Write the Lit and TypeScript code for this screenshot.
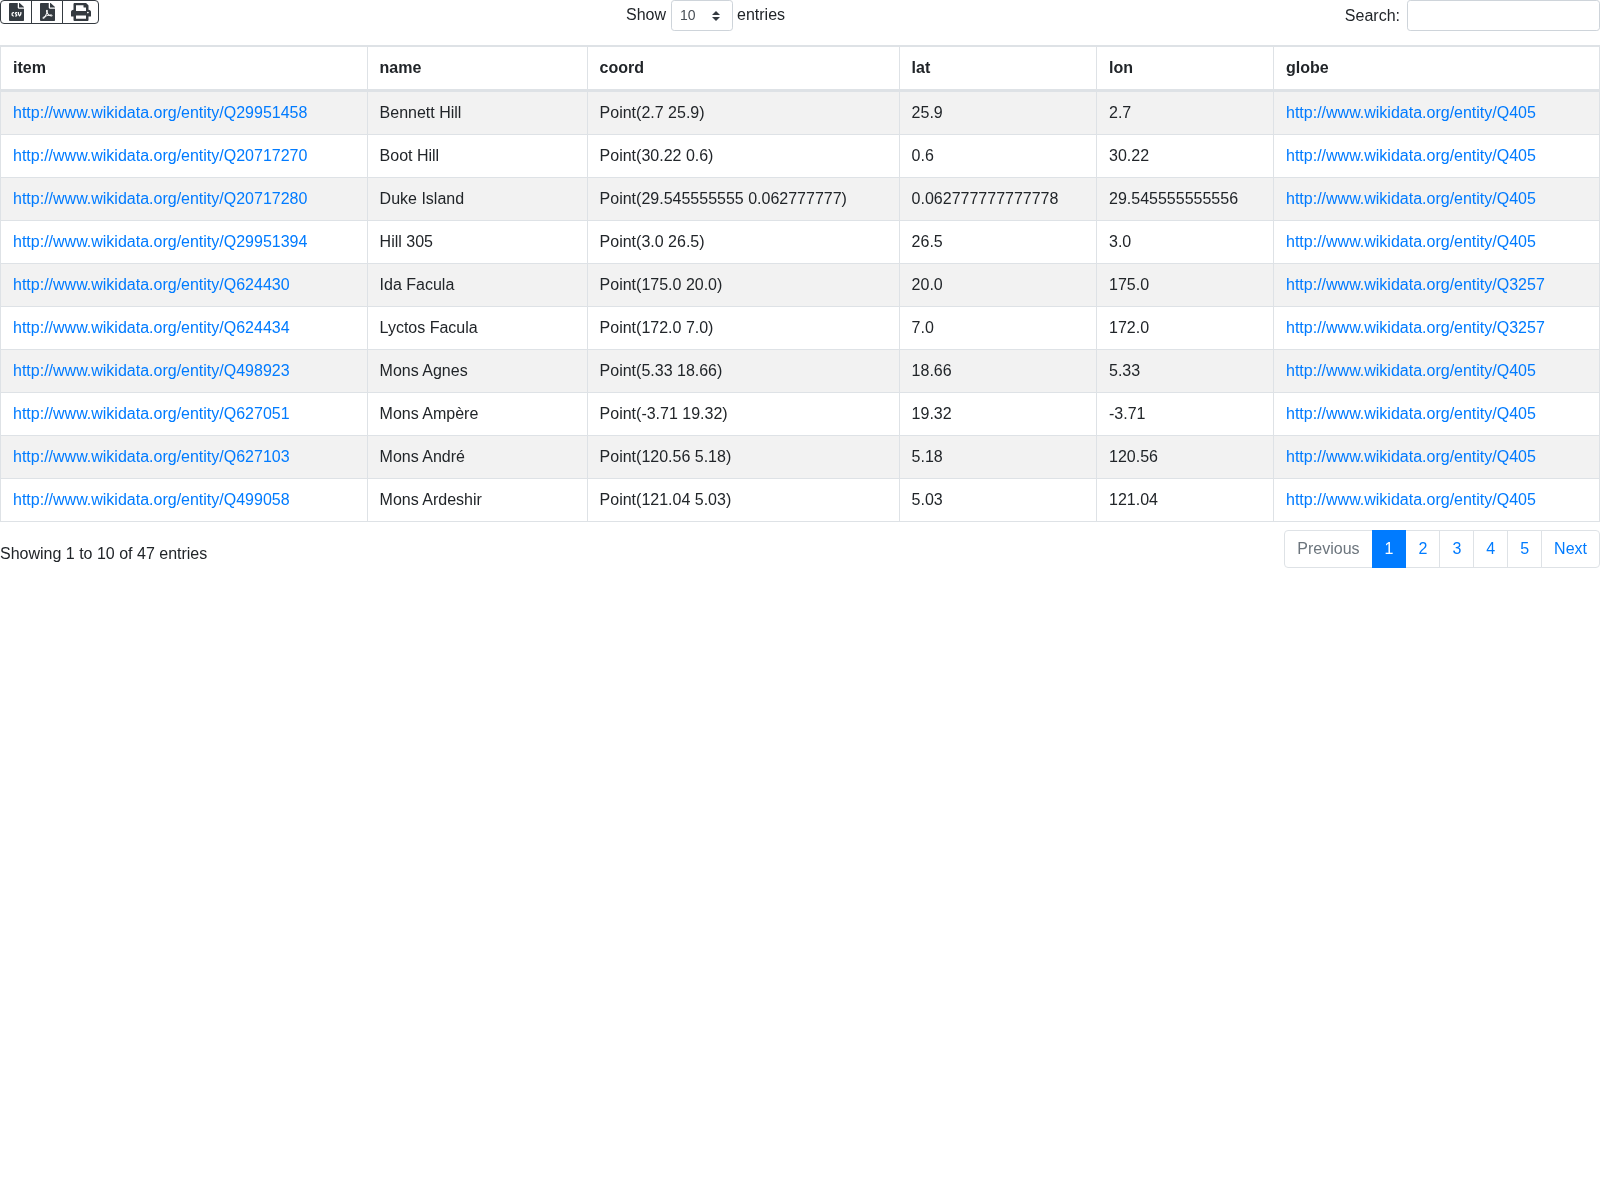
import { LitElement, html, css, svg } from "lit";
import { customElement } from "lit/decorators.js";

const ICONS = {
  csv: { vb: "0 0 384 512", w: 15, d: "M224 136V0H24C10.7 0 0 10.7 0 24v464c0 13.3 10.7 24 24 24h336c13.3 0 24-10.7 24-24V160H248c-13.2 0-24-10.8-24-24zm-96 144c0 4.42-3.58 8-8 8h-8c-8.84 0-16 7.16-16 16v32c0 8.84 7.16 16 16 16h8c4.42 0 8 3.58 8 8v16c0 4.42-3.58 8-8 8h-8c-26.51 0-48-21.49-48-48v-32c0-26.51 21.49-48 48-48h8c4.42 0 8 3.58 8 8v16zm44.27 104H160c-4.42 0-8-3.58-8-8v-16c0-4.42 3.58-8 8-8h12.27c5.95 0 10.41-3.5 10.41-6.62 0-1.3-.75-2.66-2.12-3.84l-21.89-18.77c-8.47-7.22-13.33-17.48-13.33-28.14 0-21.3 19.02-38.62 42.41-38.62H200c4.42 0 8 3.58 8 8v16c0 4.42-3.58 8-8 8h-12.27c-5.95 0-10.41 3.5-10.41 6.62 0 1.3.75 2.66 2.12 3.84l21.89 18.77c8.47 7.22 13.33 17.48 13.33 28.14.01 21.29-19 38.62-42.39 38.62zM256 264v20.8c0 20.27 5.7 40.17 16 56.88 10.3-16.7 16-36.61 16-56.88V264c0-4.42 3.58-8 8-8h16c4.42 0 8 3.58 8 8v20.8c0 35.48-12.88 68.89-36.28 94.09-3.02 3.25-7.27 5.11-11.72 5.11s-8.7-1.86-11.72-5.11c-23.4-25.2-36.28-58.61-36.28-94.09V264c0-4.42 3.58-8 8-8h16c4.42 0 8 3.58 8 8zm121-159L279.1 7c-4.5-4.5-10.6-7-17-7H256v128h128v-6.1c0-6.3-2.5-12.4-7-16.9z" },
  pdf: { vb: "0 0 384 512", w: 15, d: "M181.9 256.1c-5-16-4.9-46.9-2-46.9 8.4 0 7.6 36.9 2 46.9zm-1.7 47.2c-7.7 20.2-17.3 43.3-28.4 62.7 18.3-7 39-17.2 62.9-21.9-12.7-9.6-24.9-23.4-34.5-40.8zM86.1 428.1c0 .8 13.2-5.4 34.9-40.2-6.7 6.3-29.1 24.5-34.9 40.2zM248 160h136v328c0 13.3-10.7 24-24 24H24c-13.3 0-24-10.7-24-24V24C0 10.7 10.7 0 24 0h200v136c0 13.2 10.8 24 24 24zm-8 171.8c-20-12.2-33.3-29-42.7-53.8 4.5-18.5 11.6-46.6 6.2-64.2-4.7-29.4-42.4-26.5-47.8-6.8-5 18.3-.4 44.1 8.1 77-11.6 27.6-28.7 64.6-40.8 85.8-.1 0-.1.1-.2.1-27.1 13.9-73.6 44.5-54.5 68 5.6 6.9 16 10 21.5 10 17.9 0 35.7-18 61.1-61.8 25.8-8.5 54.1-19.1 79-23.2 21.7 11.8 47.1 19.5 64 19.5 29.2 0 31.2-32 19.7-43.4-13.9-13.6-54.3-9.7-73.6-7.2zM377 105L279 7c-4.5-4.5-10.6-7-17-7h-6v128h128v-6.1c0-6.3-2.5-12.4-7-16.9zm-74.1 255.3c4.1-2.7-2.5-11.9-42.8-9 37.1 15.8 42.8 9 42.8 9z" },
  print: { vb: "0 0 512 512", w: 20, d: "M448 192V77.25c0-8.49-3.37-16.62-9.37-22.63L393.37 9.37c-6-6-14.14-9.37-22.63-9.37H96C78.33 0 64 14.33 64 32v160c-35.35 0-64 28.65-64 64v112c0 8.84 7.16 16 16 16h48v96c0 17.67 14.33 32 32 32h320c17.67 0 32-14.33 32-32v-96h48c8.84 0 16-7.16 16-16V256c0-35.35-28.65-64-64-64zm-64 256H128v-96h256v96zm0-224H128V64h192v48c0 8.84 7.16 16 16 16h48v96zm48 72c-13.25 0-24-10.75-24-24 0-13.26 10.75-24 24-24s24 10.74 24 24c0 13.25-10.75 24-24 24z" },
};

const E = "http://www.wikidata.org/entity/";
const ROWS: [string, string, string, string, string, string][] = [
  ["Q29951458", "Bennett Hill", "Point(2.7 25.9)", "25.9", "2.7", "Q405"],
  ["Q20717270", "Boot Hill", "Point(30.22 0.6)", "0.6", "30.22", "Q405"],
  ["Q20717280", "Duke Island", "Point(29.545555555 0.062777777)", "0.062777777777778", "29.545555555556", "Q405"],
  ["Q29951394", "Hill 305", "Point(3.0 26.5)", "26.5", "3.0", "Q405"],
  ["Q624430", "Ida Facula", "Point(175.0 20.0)", "20.0", "175.0", "Q3257"],
  ["Q624434", "Lyctos Facula", "Point(172.0 7.0)", "7.0", "172.0", "Q3257"],
  ["Q498923", "Mons Agnes", "Point(5.33 18.66)", "18.66", "5.33", "Q405"],
  ["Q627051", "Mons Ampère", "Point(-3.71 19.32)", "19.32", "-3.71", "Q405"],
  ["Q627103", "Mons André", "Point(120.56 5.18)", "5.18", "120.56", "Q405"],
  ["Q499058", "Mons Ardeshir", "Point(121.04 5.03)", "5.03", "121.04", "Q405"],
];
const COLS = ["item", "name", "coord", "lat", "lon", "globe"];
const WIDTHS = [367, 220, 312, 197, 177, 326];

@customElement("app-root")
export class AppRoot extends LitElement {
  static styles = css`
    :host {
      display: block;
      font-family: "Liberation Sans", Arial, sans-serif;
      font-size: 16px;
      line-height: 24px;
      color: #212529;
      will-change: transform;
    }
    a { color: #007bff; text-decoration: none; }
    .top {
      display: grid;
      grid-template-columns: 626px auto 1fr;
      align-items: start;
      height: 45px;
    }
    .btns { display: inline-flex; height: 24px; }
    .btn {
      display: flex;
      align-items: center;
      justify-content: center;
      box-sizing: border-box;
      height: 24px;
      padding: 0 7.5px 1px;
      margin: 0 0 0 -1px;
      background: #fff;
      border: 1px solid #343a40;
    }
    .btn:first-child { margin-left: 0; border-radius: 4px 0 0 4px; }
    .btn:last-child { border-radius: 0 4px 4px 0; }
    .btn svg { display: block; height: 18px; fill: #343a40; }
    .len { display: flex; align-items: flex-start; height: 31px; line-height: 29px; }
    .len select { margin: 0 4px 0 5px; }
    select {
      appearance: none;
      box-sizing: border-box;
      width: 62px;
      height: 31px;
      padding: 4px 8px;
      font: 14px/21px "Liberation Sans", Arial, sans-serif;
      color: #495057;
      background: #fff url("data:image/svg+xml,%3csvg xmlns='http://www.w3.org/2000/svg' width='4' height='5' viewBox='0 0 4 5'%3e%3cpath fill='%23343a40' d='M2 0L0 2h4zm0 5L0 3h4z'/%3e%3c/svg%3e") no-repeat right 12px center / 8px 10px;
      border: 1px solid #ced4da;
      border-radius: 3.2px;
    }
    .search { display: flex; justify-content: flex-end; gap: 7px; height: 31px; line-height: 31px; }
    input {
      box-sizing: border-box;
      width: 193px;
      height: 31px;
      padding: 4px 8px;
      background: #fff;
      border: 1px solid #ced4da;
      border-radius: 3.2px;
      font: 14px "Liberation Sans", Arial, sans-serif;
    }
    table {
      width: 1600px;
      table-layout: fixed;
      border-collapse: separate;
      border-spacing: 0;
      border-style: solid;
      border-color: #dee2e6;
      border-width: 1px 0 1px 1px;
      box-sizing: border-box;
      font-size: 16px;
      line-height: 24px;
      color: #212529;
    }
    th, td {
      box-sizing: border-box;
      text-align: left;
      padding: 9px 12px;
      border-right: 1px solid #dee2e6;
      white-space: nowrap;
      overflow: hidden;
    }
    th:nth-child(n + 2):nth-child(-n + 4),
    td:nth-child(n + 2):nth-child(-n + 4) { padding-left: 11.6px; }
    th { font-weight: 700; border-top: 1px solid #dee2e6; border-bottom: 2px solid #dee2e6; }
    td { border-top: 1px solid #dee2e6; }
    tbody tr:nth-child(odd) { background: #f2f2f2; }
    .foot {
      display: flex;
      justify-content: space-between;
      align-items: flex-start;
      margin-top: 8px;
    }
    .info { padding-top: 12px; }
    .pages { display: flex; list-style: none; margin: 0; padding: 0; }
    .pages li {
      display: block;
      padding: 6px 12px;
      margin-left: -1px;
      border: 1px solid #dee2e6;
      background: #fff;
      color: #007bff;
    }
    .pages li:first-child { margin-left: 0; border-radius: 4px 0 0 4px; color: #6c757d; }
    .pages li:last-child { border-radius: 0 4px 4px 0; }
    .pages li.on { background: #007bff; border-color: #007bff; color: #fff; position: relative; }
  `;

  private icon(k: keyof typeof ICONS) {
    const i = ICONS[k];
    return html`<svg viewBox=${i.vb} preserveAspectRatio="none" style="width:${i.w}px">${svg`<path d=${i.d}></path>`}</svg>`;
  }

  render() {
    return html`
      <div class="top">
        <div class="btns">
          <div class="btn">${this.icon("csv")}</div>
          <div class="btn">${this.icon("pdf")}</div>
          <div class="btn">${this.icon("print")}</div>
        </div>
        <div class="len">
          <span>Show</span>
          <select><option>10</option></select>
          <span>entries</span>
        </div>
        <div class="search"><span>Search:</span><input type="text" /></div>
      </div>
      <table>
        <colgroup>${WIDTHS.map((w) => html`<col style="width:${w}px" />`)}</colgroup>
        <thead><tr>${COLS.map((c) => html`<th>${c}</th>`)}</tr></thead>
        <tbody>
          ${ROWS.map(
            (r) => html`<tr>
              <td><a href="#">${E + r[0]}</a></td>
              <td>${r[1]}</td>
              <td>${r[2]}</td>
              <td>${r[3]}</td>
              <td>${r[4]}</td>
              <td><a href="#">${E + r[5]}</a></td>
            </tr>`
          )}
        </tbody>
      </table>
      <div class="foot">
        <div class="info">Showing 1 to 10 of 47 entries</div>
        <ul class="pages">
          <li>Previous</li>
          <li class="on">1</li>
          <li>2</li>
          <li>3</li>
          <li>4</li>
          <li>5</li>
          <li>Next</li>
        </ul>
      </div>
    `;
  }
}
